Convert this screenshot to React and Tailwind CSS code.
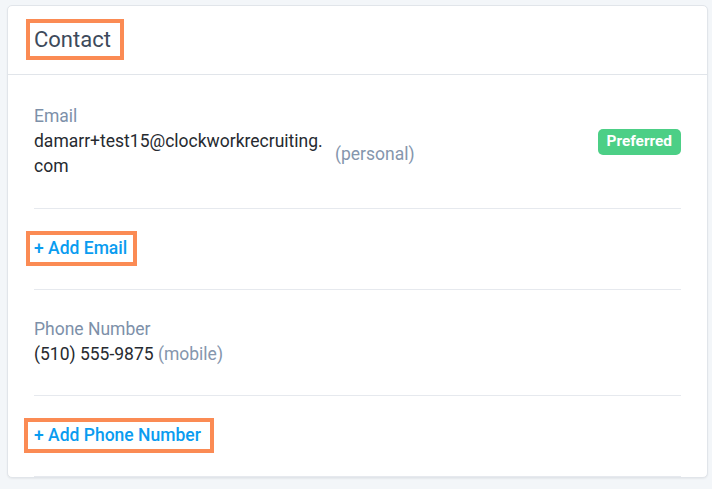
import React from 'react';

const font = { fontFamily: 'Roboto, "Noto Sans", sans-serif' };

function Divider() {
  return <div className="h-px bg-[#e6e9ee]" />;
}

function AddLink({ label, shift }) {
  return (
    <div className="flex">
      <span
        className={`inline-block border-4 border-[#fb8b54] py-[1px] text-[17.5px] leading-[25px] font-medium text-[#0a9cf0] ${shift}`}
      >
        {label}
      </span>
    </div>
  );
}

export default function App() {
  return (
    <div className="min-h-[489px] bg-[#f3f6f9] pt-[5px] pl-[7px]" style={font}>
      <div className="w-[701px] overflow-hidden rounded-[5px] border border-[#e1e5ea] bg-white shadow-[0_1px_2px_rgba(0,0,0,0.06)]">
        {/* Header */}
        <div className="border-b border-[#e1e5ea] px-[26px] pt-[13px] pb-[14px]">
          <span className="-ml-2 inline-block border-4 border-[#fb8b54] py-1 pl-1 pr-[9px] text-[22px] leading-[25px] text-[#3d4a5b]">
            Contact
          </span>
        </div>

        <div className="px-[26px]">
          {/* Email */}
          <div className="pt-[29px] pb-[29px]">
            <div className="text-[17.5px] leading-[25px] text-[#7d90a9]">Email</div>
            <div className="flex items-start justify-between">
              <div className="flex items-center">
                <div className="w-[296px] break-all text-[17.5px] leading-[25px] text-[#262a30]">
                  damarr+test15@clockworkrecruiting.com
                </div>
                <span className="ml-[5px] text-[17.5px] leading-[25px] text-[#8596ad]">(personal)</span>
              </div>
              <span className="flex h-[26px] items-center rounded-[5px] bg-[#4ccf86] px-[9px] text-[15.4px] font-bold text-white">
                Preferred
              </span>
            </div>
          </div>
          <Divider />

          <div className="pt-[22px] pb-[23px]">
            <AddLink label="+ Add Email" shift="-ml-2 pl-1 pr-[6px]" />
          </div>
          <Divider />

          {/* Phone */}
          <div className="pt-[27px] pb-[28px]">
            <div className="text-[17.5px] leading-[25px] text-[#7d90a9]">Phone Number</div>
            <div className="text-[17.5px] leading-[25px] text-[#262a30]">
              (510) 555-9875 <span className="text-[#8596ad]">(mobile)</span>
            </div>
          </div>
          <Divider />

          <div className="pt-[22px] pb-[23px]">
            <AddLink label="+ Add Phone Number" shift="-ml-[10px] pl-[6px] pr-[9px]" />
          </div>
          <Divider />
        </div>
      </div>
    </div>
  );
}
